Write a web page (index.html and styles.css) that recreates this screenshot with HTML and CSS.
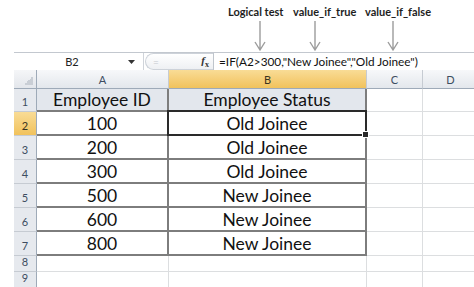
FILE: index.html
```html
<!DOCTYPE html>
<html lang="en">
<head>
  <meta charset="UTF-8">
  <title>IF function example</title>
  <link rel="stylesheet" href="styles.css">
</head>
<body>

  <!-- callouts for the three IF arguments -->
  <div class="notes">
    <div class="labels">
      <span class="note note-test">Logical test</span>
      <span class="note note-true">value_if_true</span>
      <span class="note note-false">value_if_false</span>
    </div>
    <svg class="arrows" width="474" height="32" viewBox="0 0 474 32">
      <g stroke="#9c9c9c" stroke-width="1.4" fill="none">
        <path d="M260 1 V30 M255 22 L260 30 L265 22"/>
        <path d="M315 1 V30 M310 22 L315 30 L320 22"/>
        <path d="M393 1 V30 M388 22 L393 30 L398 22"/>
      </g>
    </svg>
  </div>

  <div class="sheet">
    <div class="formula-bar">
      <div class="name-box">
        <span class="name-text">B2</span>
        <svg class="drop" width="7" height="4" viewBox="0 0 7 4"><path d="M0 0 H7 L3.5 4 Z" fill="#333"/></svg>
      </div>
      <div class="fx-pill">
        <span class="fx-eq">=</span>
        <span class="fx"><i>f</i><sub>x</sub></span>
      </div>
      <div class="formula">=IF(A2&gt;300,"New Joinee","Old Joinee")</div>
    </div>

    <div class="grid">
      <div class="corner"></div>
      <div class="col-head">A</div>
      <div class="col-head is-sel">B</div>
      <div class="col-head">C</div>
      <div class="col-head">D</div>

      <div class="row-head">1</div>
      <div class="cell t-a title">Employee ID</div>
      <div class="cell t-b title">Employee Status</div>
      <div class="cell"></div>
      <div class="cell"></div>

      <div class="row-head is-sel">2</div>
      <div class="cell t-a">100</div>
      <div class="cell t-b active">Old Joinee</div>
      <div class="cell"></div>
      <div class="cell"></div>

      <div class="row-head">3</div>
      <div class="cell t-a">200</div>
      <div class="cell t-b">Old Joinee</div>
      <div class="cell"></div>
      <div class="cell"></div>

      <div class="row-head">4</div>
      <div class="cell t-a">300</div>
      <div class="cell t-b">Old Joinee</div>
      <div class="cell"></div>
      <div class="cell"></div>

      <div class="row-head">5</div>
      <div class="cell t-a">500</div>
      <div class="cell t-b">New Joinee</div>
      <div class="cell"></div>
      <div class="cell"></div>

      <div class="row-head">6</div>
      <div class="cell t-a">600</div>
      <div class="cell t-b">New Joinee</div>
      <div class="cell"></div>
      <div class="cell"></div>

      <div class="row-head">7</div>
      <div class="cell t-a">800</div>
      <div class="cell t-b">New Joinee</div>
      <div class="cell"></div>
      <div class="cell"></div>

      <div class="row-head">8</div>
      <div class="cell"></div>
      <div class="cell"></div>
      <div class="cell"></div>
      <div class="cell"></div>

      <div class="row-head">9</div>
      <div class="cell"></div>
      <div class="cell"></div>
      <div class="cell"></div>
      <div class="cell"></div>
    </div>
  </div>

</body>
</html>
```

FILE: styles.css
```css
body {
  margin: 0;
  width: 474px;
  height: 287px;
  overflow: hidden;
  background: #fff;
  font-family: Lato, "Liberation Sans", sans-serif;
}
.notes {
  height: 52px;
}
.labels {
  display: flex;
  height: 20px;
  padding-left: 228px;
  box-sizing: border-box;
  padding-top: 5px;
  font-size: 11px;
  line-height: 14px;
  font-weight: bold;
  color: #1e1e1e;
}
.note-test {
  width: 65px;
}
.note-true {
  width: 72px;
}
.arrows {
  display: block;
}
.sheet {
  margin-left: 14px;
  width: 460px;
  overflow: hidden;
}

/* formula bar */
.formula-bar {
  display: flex;
  height: 18px;
  border-top: 1px solid #c3c8cf;
  box-sizing: border-box;
  background: #fff;
}
.name-box {
  display: flex;
  align-items: center;
  width: 129px;
  border-right: 1px solid #d0d4da;
  font-size: 11px;
  color: #222;
}
.name-text {
  flex: 1;
  text-align: center;
  padding-left: 2px;
}
.drop {
  margin-right: 8px;
}
.fx-pill {
  display: flex;
  align-items: center;
  justify-content: space-between;
  width: 68px;
  margin-left: 1px;
  padding: 0 4px 0 7px;
  box-sizing: border-box;
  border: 1px solid #cdd2d9;
  border-right: none;
  border-radius: 9px 0 0 9px;
  background: linear-gradient(#ffffff, #eef0f3);
}
.fx-eq {
  font-size: 10px;
  color: #c4c8ce;
}
.fx {
  font-family: "Liberation Serif", serif;
  font-size: 11px;
  font-weight: bold;
  color: #333;
}
.fx sub {
  font-size: 8px;
}
.formula {
  flex: 1;
  border-left: 1px solid #bfc5cc;
  padding-left: 5px;
  font-size: 11.8px;
  line-height: 17px;
  color: #111;
  white-space: nowrap;
}

/* grid */
.grid {
  display: grid;
  grid-template-columns: 23px 132px 198px 56px 56px;
  grid-template-rows: 19px 23px repeat(6, 24px) 16px 16px;
}
.grid > div {
  box-sizing: border-box;
}
.corner {
  position: relative;
  background: linear-gradient(#f5f6f8, #e3e6eb);
  border-right: 1px solid #9eaab8;
  border-bottom: 1px solid #9eaab8;
}
.corner::after {
  content: "";
  position: absolute;
  right: 3px;
  bottom: 3px;
  width: 9px;
  height: 9px;
  background: linear-gradient(135deg, transparent 50%, #c9ced5 50%);
}
.col-head {
  display: flex;
  align-items: center;
  justify-content: center;
  background: linear-gradient(#f7f8fa, #e3e7ec);
  border-right: 1px solid #c6cbd2;
  border-bottom: 1px solid #9eaab8;
  font-size: 11px;
  color: #3d4d61;
}
.row-head {
  display: flex;
  align-items: flex-end;
  justify-content: center;
  padding-bottom: 2px;
  background: #e6e9ee;
  border-right: 1px solid #9eaab8;
  border-bottom: 1px solid #c6cbd2;
  font-size: 11px;
  line-height: 14px;
  color: #3d4d61;
}
.col-head.is-sel,
.row-head.is-sel {
  background: linear-gradient(#f9dc96, #f1c25c);
  color: #3a3320;
}
.cell {
  display: flex;
  align-items: flex-end;
  justify-content: center;
  border-right: 1px solid #dcdee0;
  border-bottom: 1px solid #dcdee0;
  font-size: 17.5px;
  line-height: 21px;
  color: #111;
}
.cell.t-a,
.cell.t-b {
  border-right: 2px solid #7d7d7d;
  border-bottom: 2px solid #7d7d7d;
}
.cell.title {
  background: #e3e7ed;
}
.cell.active {
  position: relative;
}
.cell.active::after {
  content: "";
  position: absolute;
  left: -2px;
  top: -2px;
  right: -2px;
  bottom: -2px;
  border: 2px solid #2a2a2a;
}
.cell.active::before {
  content: "";
  position: absolute;
  right: -4px;
  bottom: -4px;
  width: 5px;
  height: 5px;
  background: #2a2a2a;
  border: 1px solid #fff;
  z-index: 1;
}
```
